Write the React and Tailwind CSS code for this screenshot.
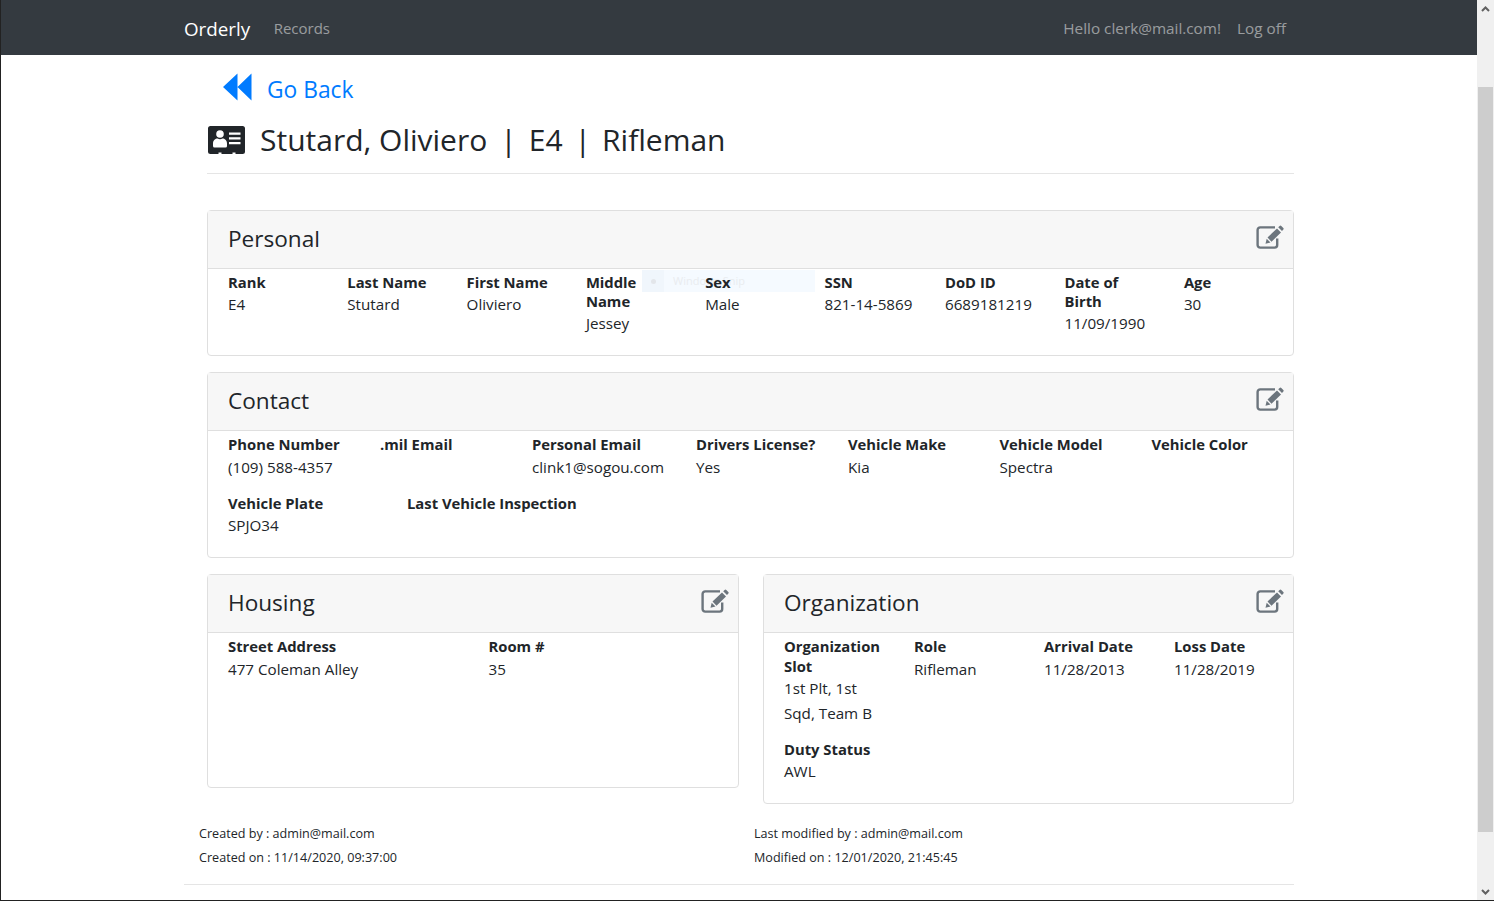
import React from "react";

const F = ({ label, value, className = "", valueClass = "leading-6" }) => (
  <div className={className}>
    <div className="font-bold text-[14.8px] leading-[19.2px]">{label}</div>
    {value ? <div className={`text-[15.2px] ${valueClass}`}>{value}</div> : null}
  </div>
);

const EditIcon = () => (
  <svg width="28" height="24" viewBox="0 0 28 24" className="mt-[14px] shrink-0">
    <path d="M19 2.4H4.2a2.6 2.6 0 0 0-2.6 2.6v15a2.6 2.6 0 0 0 2.6 2.6h14.4a2.6 2.6 0 0 0 2.6-2.6v-6.5" fill="none" stroke="#6c757d" strokeWidth="2.4" />
    <path d="M11.5 12.5L21 3.4l4 4-9.5 9.4zM10.7 13.8l3.8 3.8-5 1.2zM22.2 2.2l1.4-1.3a1.2 1.2 0 0 1 1.7 0l2 2a1.2 1.2 0 0 1 0 1.7l-1.3 1.4z" fill="#6c757d" />
  </svg>
);

const IdIcon = () => (
  <svg width="37" height="28" viewBox="0 0 37 28" className="shrink-0">
    <path d="M2.500 0h32A2.500 2.500 0 0 1 37 2.500v23a2.500 2.500 0 0 1-2.500 2.500H27.500v-1.500h-3V28h-11v-1.500h-3V28H2.500A2.500 2.500 0 0 1 0 25.500v-23A2.500 2.500 0 0 1 2.500 0z" fill="#212529" />
    <circle cx="12" cy="8" r="3.800" fill="#fff" />
    <path d="M5 20v-2.500C5 14.500 7.500 12.600 9.500 12.600c1.600 1 3.400 1 5 0 2 0 4.500 1.900 4.500 4.900V20a1.500 1.500 0 0 1-1.500 1.500h-11A1.500 1.500 0 0 1 5 20z" fill="#fff" />
    <path d="M21 6.500h11.500v2.300H21zM21 11.200h11.500v2.300H21zM21 15.900h11.500v2.300H21z" fill="#fff" />
  </svg>
);

const BackIcon = () => (
  <svg width="29" height="28" viewBox="0 0 29 28" className="shrink-0 -mt-[7px]">
    <path d="M0 14L14.500 0.500v27zM14.500 14L28.500 0.500v27z" fill="#007bff" />
  </svg>
);

const Card = ({ title, children, className = "" }) => (
  <section className={`rounded border border-[#dfdfdf] ${className}`}>
    <header className="h-[58px] bg-[#f7f7f7] border-b border-[#dfdfdf] pl-5 pr-[9px] flex items-start justify-between">
      <h3 className="text-[22.6px] leading-[28px] mt-[14px]">{title}</h3>
      <EditIcon />
    </header>
    <div className="px-5 pt-[4px] pb-5">{children}</div>
  </section>
);

export default function App() {
  return (
    <div className="h-[901px] w-[1494px] overflow-hidden flex border-l border-b border-[#222] bg-white text-[#212529]" style={{ fontFamily: '"Open Sans", sans-serif' }}>
      <div className="w-[1476px] shrink-0 relative">
        <div className="absolute left-[641px] top-[270px] w-[173px] h-[22px] bg-[#f5faff] flex items-center text-[11px] text-[#e9ecef]">
          <span className="w-[22px] h-[22px] bg-[#f0f6fc] flex items-center justify-center">
            <span className="w-[5px] h-[5px] rounded-full bg-[#e3e6ea]" />
          </span>
          <span className="ml-[9px]">Windows Snip</span>
        </div>

        <nav className="h-[55px] bg-[#343a40] pl-[183px] pr-[191px] flex items-center justify-between relative">
          <div className="flex items-center">
            <span className="text-white text-[18.8px] leading-none mt-[3px]">Orderly</span>
            <span className="ml-[23.5px] text-[15px] text-white/50 mt-[1px]">Records</span>
          </div>
          <div className="flex gap-4 text-[15.3px] text-white/50 mt-[1px]">
            <span>Hello clerk@mail.com!</span>
            <span>Log off</span>
          </div>
        </nav>

        <main className="pl-[206px] w-[1293px] relative">
          <a className="flex items-center pl-[16px] pt-[17px] h-[53px] text-[#007bff]">
            <BackIcon />
            <span className="ml-[15px] text-[22.8px] leading-none">Go Back</span>
          </a>
          <div className="flex items-center h-[66px] border-b border-[#e5e5e5]">
            <span className="ml-[1px] -mt-[2px]"><IdIcon /></span>
            <h1 className="ml-[15px] text-[30px] leading-none -mt-[2px] flex">
              <span>Stutard, Oliviero</span>
              <span className="ml-[13px]">|</span>
              <span className="ml-[12px]">E4</span>
              <span className="ml-[12px]">|</span>
              <span className="ml-[11px]">Rifleman</span>
            </h1>
          </div>
          <div className="mt-[36px] flex flex-col gap-4">
            <Card title="Personal">
              <div className="grid grid-cols-[119.3px_119.3px_119.3px_119.3px_119.3px_120.5px_119.5px_119.4px_80px]">
                <F label="Rank" value="E4" />
                <F label="Last Name" value="Stutard" />
                <F label="First Name" value="Oliviero" />
                <F label="Middle Name" value="Jessey" className="pr-8" />
                <F label="Sex" value="Male" />
                <F label="SSN" value="821-14-5869" />
                <F label="DoD ID" value="6689181219" />
                <F label="Date of Birth" value="11/09/1990" className="pr-8" />
                <F label="Age" value="30" />
              </div>
            </Card>
            <Card title="Contact">
              <div className="grid grid-cols-[152px_152px_164px_152px_151.5px_152px_122px]">
                <F label="Phone Number" value="(109) 588-4357" />
                <F label=".mil Email" />
                <F label="Personal Email" value="clink1@sogou.com" />
                <F label="Drivers License?" value="Yes" />
                <F label="Vehicle Make" value="Kia" />
                <F label="Vehicle Model" value="Spectra" />
                <F label="Vehicle Color" />
              </div>
              <div className="mt-[15.5px] grid grid-cols-[179px_300px]">
                <F label="Vehicle Plate" value="SPJO34" />
                <F label="Last Vehicle Inspection" />
              </div>
            </Card>
            <div className="flex gap-6 items-start">
              <Card title="Housing" className="w-[532px] h-[214px]">
                <div className="grid grid-cols-[260.5px_200px]">
                  <F label="Street Address" value="477 Coleman Alley" />
                  <F label="Room #" value="35" />
                </div>
              </Card>
              <Card title="Organization" className="w-[531px]">
                <div className="grid grid-cols-[130px_130px_130px_100px]">
                  <F label="Organization Slot" value="1st Plt, 1st Sqd, Team B" valueClass="leading-[25px]" className="pr-[28px]" />
                  <F label="Role" value="Rifleman" />
                  <F label="Arrival Date" value="11/28/2013" />
                  <F label="Loss Date" value="11/28/2019" />
                </div>
                <F label="Duty Status" value="AWL" className="mt-[14.5px]" />
              </Card>
            </div>
          </div>
        </main>

        <footer className="absolute top-[822px] left-[198px] flex text-[12.6px] leading-6">
          <div className="w-[555px]">
            <div>Created by : admin@mail.com</div>
            <div>Created on : 11/14/2020, 09:37:00</div>
          </div>
          <div>
            <div>Last modified by : admin@mail.com</div>
            <div>Modified on : 12/01/2020, 21:45:45</div>
          </div>
        </footer>
        <hr className="absolute top-[884px] left-[183px] w-[1110px] border-t border-[#e5e5e5]" />
      </div>

      <aside className="w-[17px] shrink-0 bg-[#f0f0f0] flex flex-col">
        <div className="h-[17px] flex items-center justify-center">
          <svg width="9" height="6" viewBox="0 0 9 6"><path d="M1 5l3.500-3.500L8 5" fill="none" stroke="#606060" strokeWidth="2" /></svg>
        </div>
        <div className="h-[70px]" />
        <div className="h-[745px] mx-[1px] bg-[#cdcdcd]" />
        <div className="flex-1" />
        <div className="h-[17px] flex items-center justify-center">
          <svg width="9" height="6" viewBox="0 0 9 6"><path d="M1 1l3.500 3.500L8 1" fill="none" stroke="#606060" strokeWidth="2" /></svg>
        </div>
      </aside>
    </div>
  );
}
